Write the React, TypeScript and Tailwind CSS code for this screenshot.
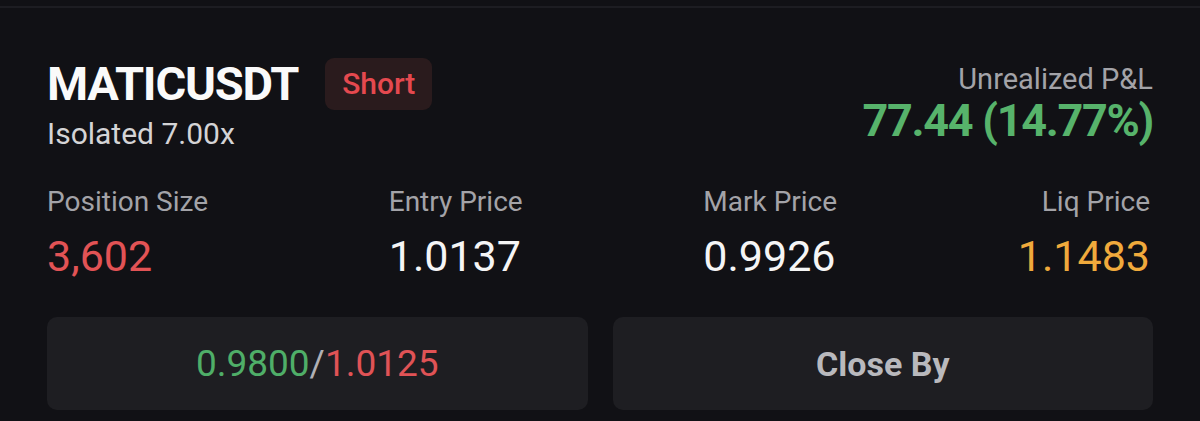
export default function App() {
  return (
    <div className="h-[421px] w-full bg-[#111115] font-['Roboto',sans-serif] overflow-hidden">
      <div className="pt-[6px]">
        <div className="h-[2px] bg-[#1d1d22]" />
      </div>

      <div className="px-[47px] pt-[50px]">
        {/* header */}
        <div className="flex justify-between items-start">
          <div className="flex flex-col">
            <div className="flex items-center gap-[27px]">
              <h1 className="font-bold text-[47px] leading-[52px] tracking-[-1.2px] text-[#fafafa]">
                MATICUSDT
              </h1>
              <span className="h-[52px] w-[107px] rounded-[9px] bg-[#2a1b1d] flex items-center justify-center text-[30px] leading-[30px] font-medium text-[#e5494f]">
                Short
              </span>
            </div>
            <p className="text-[30px] leading-[48px] text-[#d4d4d6]">Isolated 7.00x</p>
          </div>

          <div className="mt-[3px] flex flex-col items-end">
            <p className="text-[29px] leading-[36px] text-[#a3a3a8]">Unrealized P&amp;L</p>
            <p className="font-bold text-[45px] leading-[48px] tracking-[-1.3px] text-[#57b36b]">
              77.44 (14.77%)
            </p>
          </div>
        </div>

        {/* stats */}
        <div className="mt-[30px] pr-[3px] flex justify-between">
          <div>
            <p className="text-[28px] leading-[28px] text-[#a3a3a8]">Position Size</p>
            <p className="mt-[19px] text-[43px] leading-[43px] text-[#e25355]">3,602</p>
          </div>
          <div>
            <p className="text-[28px] leading-[28px] text-[#a3a3a8]">Entry Price</p>
            <p className="mt-[19px] text-[43px] leading-[43px] text-[#f5f5f5]">1.0137</p>
          </div>
          <div>
            <p className="text-[28px] leading-[28px] text-[#a3a3a8]">Mark Price</p>
            <p className="mt-[19px] text-[43px] leading-[43px] text-[#f5f5f5]">0.9926</p>
          </div>
          <div className="text-right">
            <p className="text-[28px] leading-[28px] text-[#a3a3a8]">Liq Price</p>
            <p className="mt-[19px] text-[43px] leading-[43px] text-[#f0aa3c]">1.1483</p>
          </div>
        </div>

        {/* actions */}
        <div className="mt-[39px] grid grid-cols-2 gap-[25px]">
          <button className="h-[93px] rounded-[10px] bg-[#1e1e22] flex items-center justify-center text-[37px] leading-[37px]">
            <span className="text-[#4fae68]">0.9800</span>
            <span className="text-[#b0b0b5]">/</span>
            <span className="text-[#e05356]">1.0125</span>
          </button>
          <button className="h-[93px] rounded-[10px] bg-[#1e1e22] flex items-center justify-center text-[34px] leading-[34px] font-bold text-[#b9b9bd]">
            Close By
          </button>
        </div>
      </div>
    </div>
  );
}
